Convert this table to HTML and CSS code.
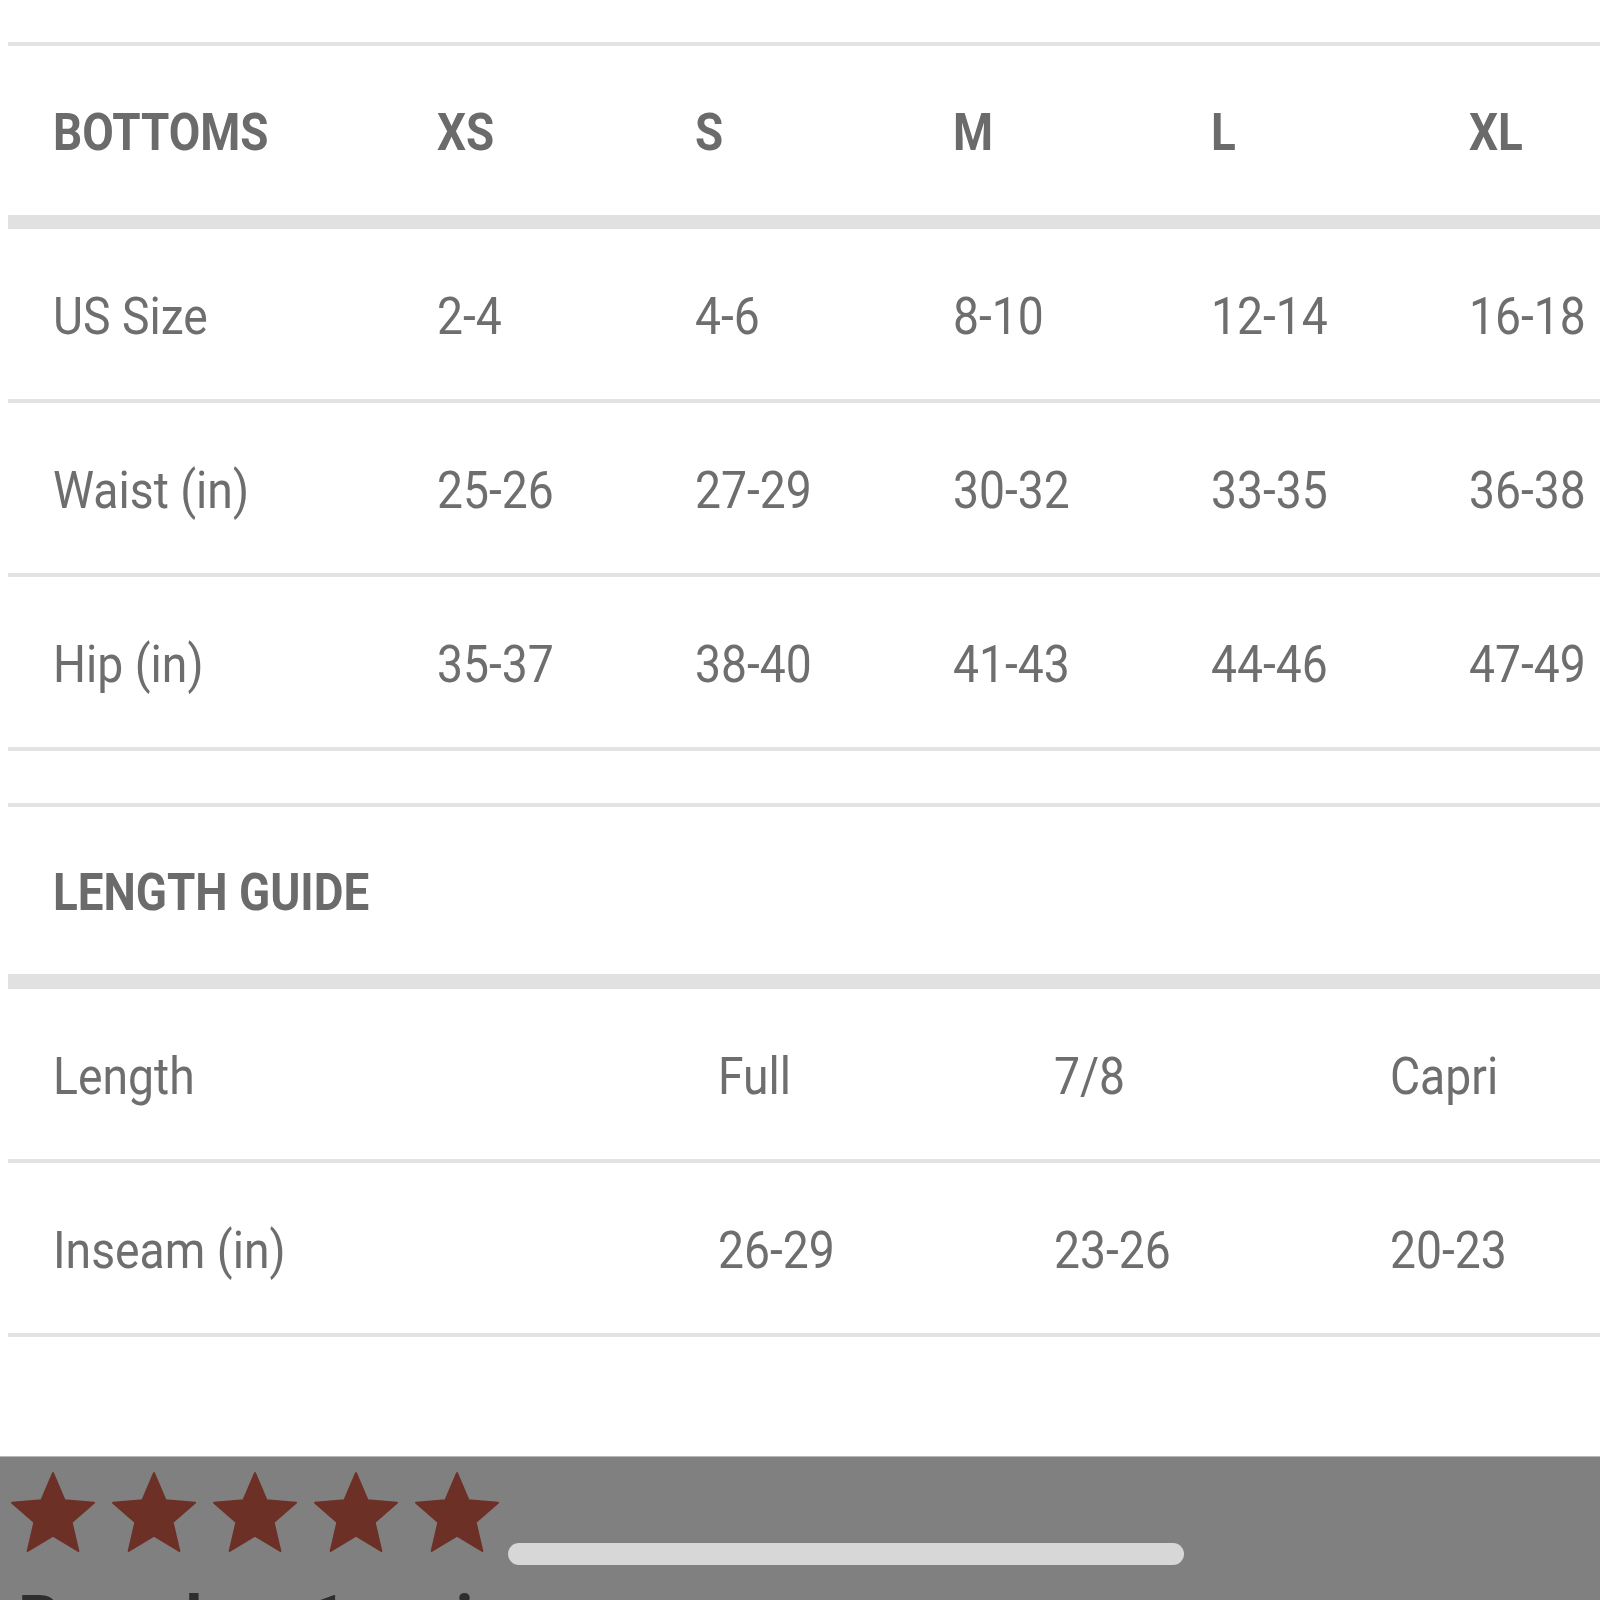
FILE: index.html
```html
<!DOCTYPE html>
<html lang="en">
<head>
<meta charset="utf-8">
<title>Size Chart</title>
<link rel="stylesheet" href="styles.css">
</head>
<body>
<div class="modal">
  <div class="chart chart-sizes">
    <div class="row head">
      <div class="cell"><span class="t">BOTTOMS</span></div>
      <div class="cell"><span class="t">XS</span></div>
      <div class="cell"><span class="t">S</span></div>
      <div class="cell"><span class="t">M</span></div>
      <div class="cell"><span class="t">L</span></div>
      <div class="cell"><span class="t">XL</span></div>
    </div>
    <div class="row">
      <div class="cell"><span class="t">US Size</span></div>
      <div class="cell"><span class="t">2-4</span></div>
      <div class="cell"><span class="t">4-6</span></div>
      <div class="cell"><span class="t">8-10</span></div>
      <div class="cell"><span class="t">12-14</span></div>
      <div class="cell"><span class="t">16-18</span></div>
    </div>
    <div class="row">
      <div class="cell"><span class="t">Waist (in)</span></div>
      <div class="cell"><span class="t">25-26</span></div>
      <div class="cell"><span class="t">27-29</span></div>
      <div class="cell"><span class="t">30-32</span></div>
      <div class="cell"><span class="t">33-35</span></div>
      <div class="cell"><span class="t">36-38</span></div>
    </div>
    <div class="row">
      <div class="cell"><span class="t">Hip (in)</span></div>
      <div class="cell"><span class="t">35-37</span></div>
      <div class="cell"><span class="t">38-40</span></div>
      <div class="cell"><span class="t">41-43</span></div>
      <div class="cell"><span class="t">44-46</span></div>
      <div class="cell"><span class="t">47-49</span></div>
    </div>
  </div>

  <div class="chart chart-length">
    <div class="row head">
      <div class="cell"><span class="t">LENGTH GUIDE</span></div>
    </div>
    <div class="row">
      <div class="cell"><span class="t">Length</span></div>
      <div class="cell"><span class="t">Full</span></div>
      <div class="cell"><span class="t">7/8</span></div>
      <div class="cell"><span class="t">Capri</span></div>
    </div>
    <div class="row">
      <div class="cell"><span class="t">Inseam (in)</span></div>
      <div class="cell"><span class="t">26-29</span></div>
      <div class="cell"><span class="t">23-26</span></div>
      <div class="cell"><span class="t">20-23</span></div>
    </div>
  </div>
</div>

<div class="reviews">
  <div class="stars">
    <svg class="star" viewBox="1.5 1.5 21 20" width="86" height="82"><path d="M12 17.27L18.18 21l-1.64-7.03L22 9.24l-7.19-.61L12 2 9.19 8.630 2 9.24l5.46 4.73L5.82 21z"/></svg>
    <svg class="star" viewBox="1.5 1.5 21 20" width="86" height="82"><path d="M12 17.27L18.18 21l-1.64-7.03L22 9.24l-7.19-.61L12 2 9.19 8.63 2 9.24l5.46 4.73L5.82 21z"/></svg>
    <svg class="star" viewBox="1.5 1.5 21 20" width="86" height="82"><path d="M12 17.27L18.18 21l-1.64-7.03L22 9.24l-7.19-.61L12 2 9.19 8.63 2 9.24l5.46 4.73L5.82 21z"/></svg>
    <svg class="star" viewBox="1.5 1.5 21 20" width="86" height="82"><path d="M12 17.27L18.18 21l-1.64-7.03L22 9.24l-7.19-.61L12 2 9.19 8.63 2 9.24l5.46 4.73L5.82 21z"/></svg>
    <svg class="star" viewBox="1.5 1.5 21 20" width="86" height="82"><path d="M12 17.27L18.18 21l-1.64-7.03L22 9.24l-7.19-.61L12 2 9.19 8.63 2 9.24l5.46 4.73L5.82 21z"/></svg>
  </div>
  <div class="review-count">Based on 1 review</div>
  <div class="scroll-pill"></div>
</div>
</body>
</html>
```

FILE: styles.css
```css
html, body {
  margin: 0;
  padding: 0;
  background: #ffffff;
}

body {
  width: 1600px;
  height: 1600px;
  overflow: hidden;
  font-family: Roboto, "Noto Sans", sans-serif;
  color: #6e6e6e;
}

.modal {
  height: 1456px;
  padding-left: 8px;
  padding-top: 42px;
  box-sizing: border-box;
  overflow: hidden;
  background: #ffffff;
}

.chart {
  width: 1674px;
  border-top: 4px solid #e3e3e3;
}

.chart-length {
  margin-top: 52px;
}

.row {
  display: grid;
  height: 170px;
  align-items: center;
  border-bottom: 4px solid #e3e3e3;
}

.row.head {
  height: 169px;
  border-bottom: 14px solid #e1e1e1;
}

.chart-length .row.head {
  height: 167px;
  border-bottom-width: 15px;
}

.chart-sizes .row {
  grid-template-columns: 384px repeat(5, 258px);
}

.chart-length .row {
  grid-template-columns: 665px repeat(3, 336px);
}

.cell {
  padding-left: 45px;
  padding-top: 6px;
  font-size: 52px;
  line-height: 1;
  white-space: nowrap;
}

.t {
  display: inline-block;
  transform: scaleX(0.89);
  transform-origin: 0 50%;
}

.head .cell {
  font-weight: 700;
  color: #6b6b6b;
  padding-top: 5px;
}

.head .t {
  transform: scaleX(0.88);
}

.reviews {
  position: relative;
  height: 144px;
  background: #808080;
  border-top: 1px solid #b8b8b8;
  box-sizing: border-box;
  padding-top: 14px;
  padding-left: 10px;
}

.stars {
  display: flex;
  gap: 15px;
  height: 82px;
}

.star {
  display: block;
  fill: #6d3027;
  stroke: #6d3027;
  stroke-width: 0.5;
  stroke-linejoin: round;
}

.review-count {
  margin-top: 35px;
  padding-left: 8px;
  font-size: 66px;
  line-height: 1;
  font-weight: 700;
  color: #2e2e2e;
  white-space: nowrap;
}

.scroll-pill {
  position: absolute;
  left: 508px;
  top: 86px;
  width: 676px;
  height: 22px;
  border-radius: 11px;
  background: #d7d7d7;
}
```
